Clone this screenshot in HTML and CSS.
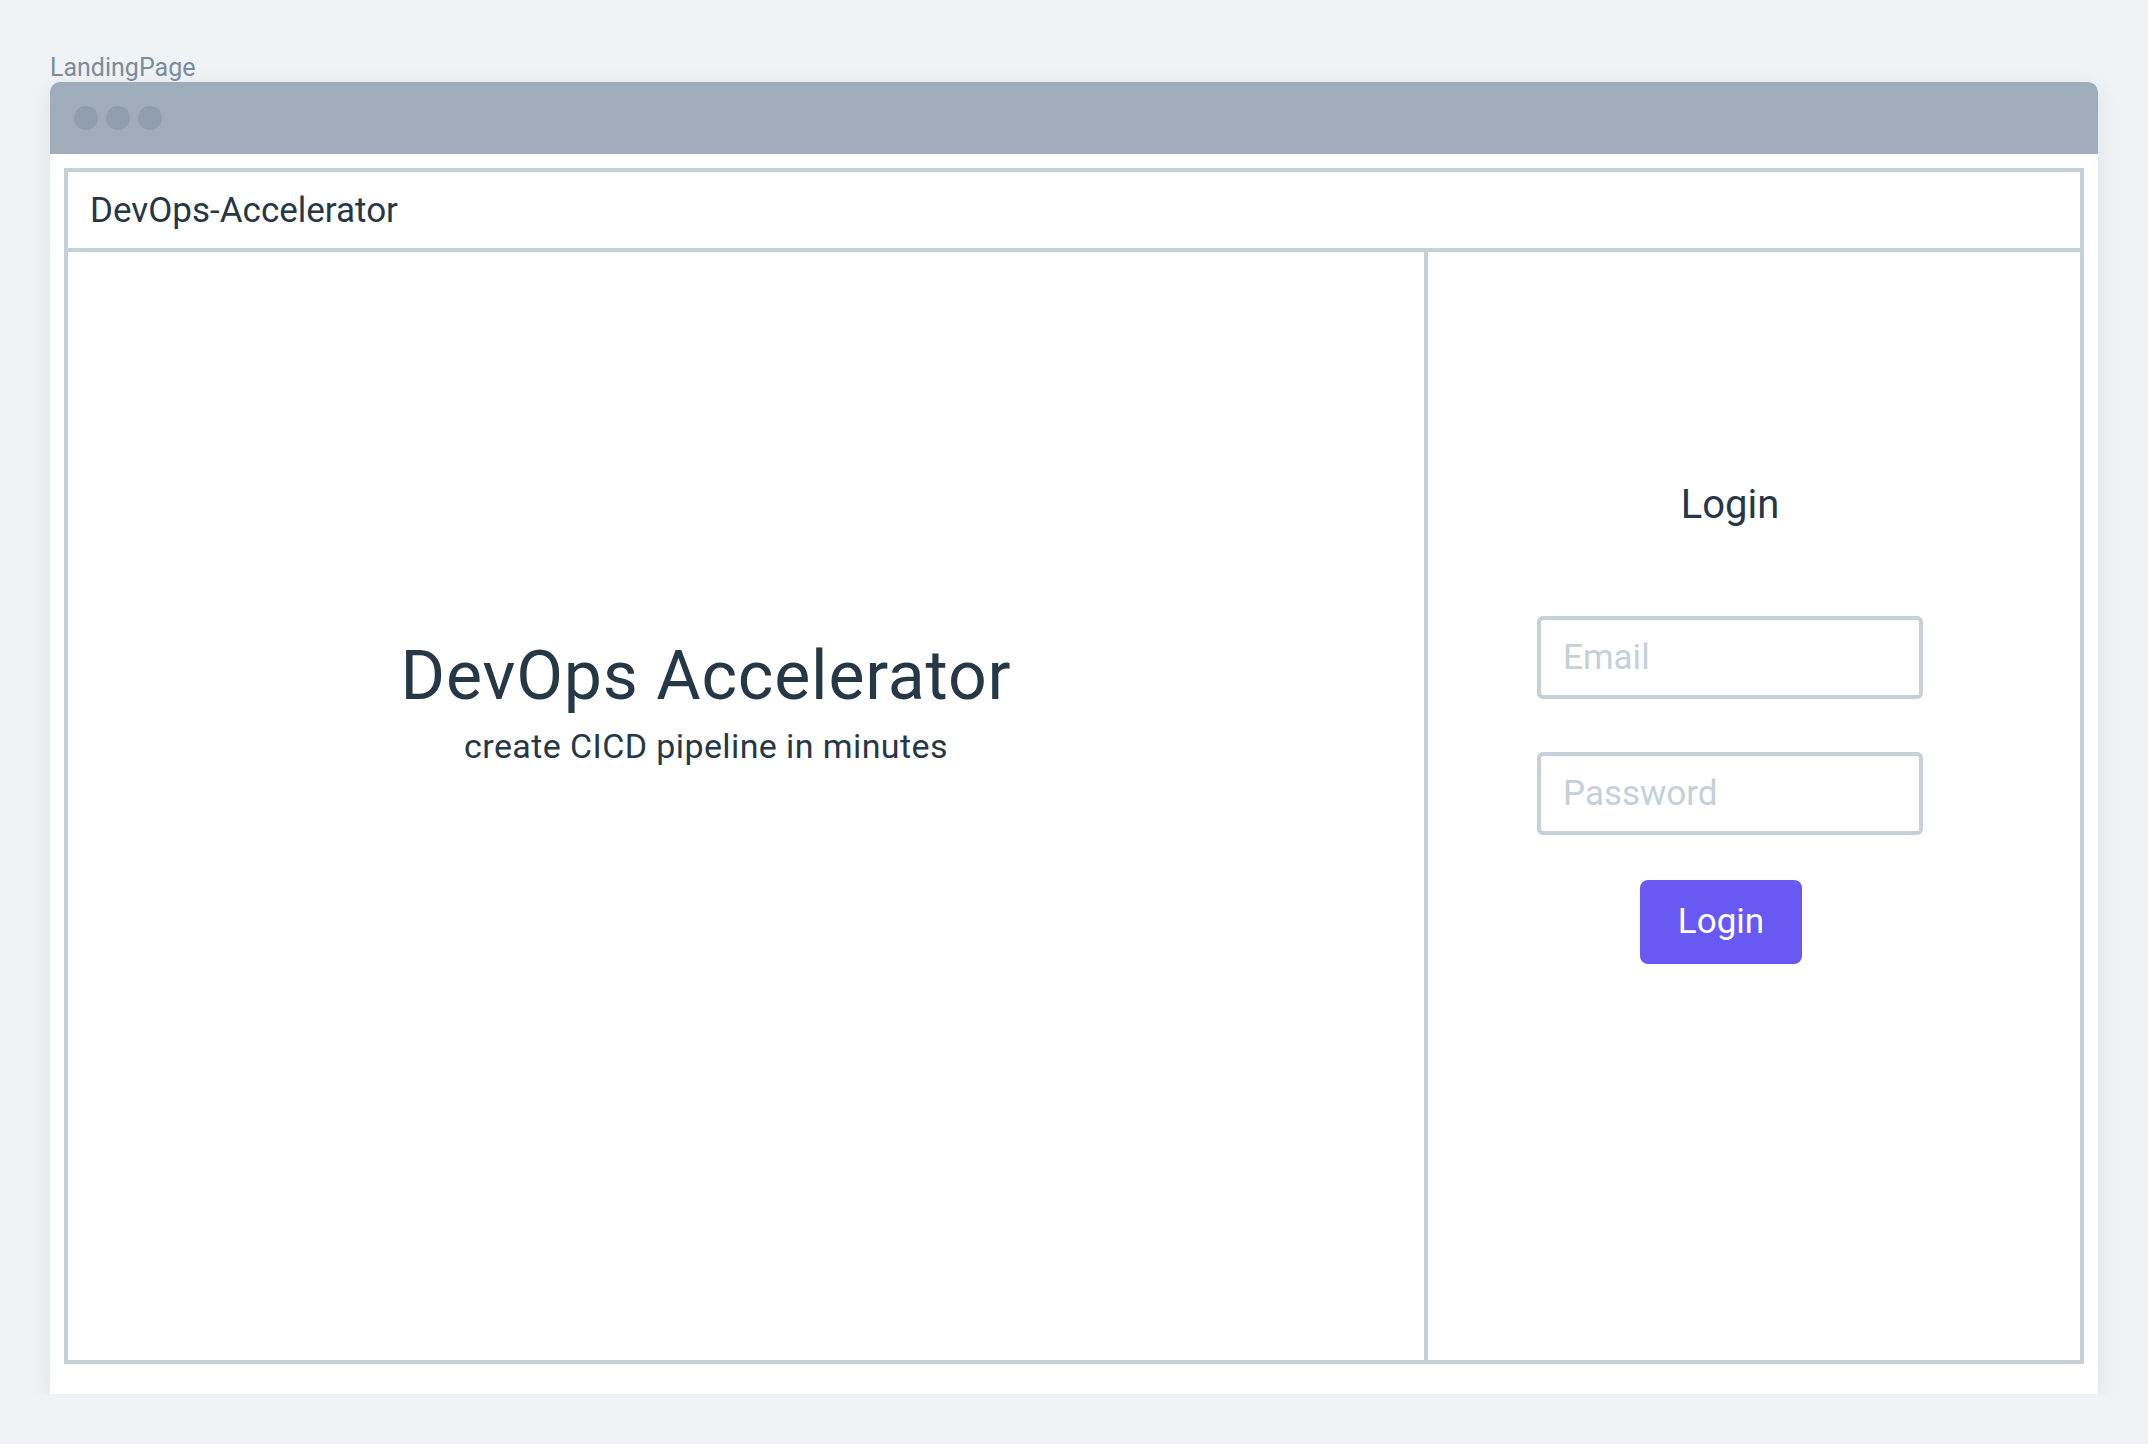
FILE: index.html
```html
<!DOCTYPE html>
<html lang="en">
<head>
<meta charset="utf-8">
<title>LandingPage</title>
<link rel="stylesheet" href="styles.css">
</head>
<body>
  <div class="page">
    <div class="frame-label">LandingPage</div>
    <div class="window">
      <div class="titlebar">
        <span class="dot"></span><span class="dot"></span><span class="dot"></span>
      </div>
      <div class="window-body">
        <div class="app">
          <header class="app-header">DevOps-Accelerator</header>
          <main class="app-main">
            <section class="hero">
              <h1 class="hero-title">DevOps Accelerator</h1>
              <p class="hero-sub">create CICD pipeline in minutes</p>
            </section>
            <section class="login">
              <h2 class="login-title">Login</h2>
              <div class="field"><span class="placeholder">Email</span></div>
              <div class="field field-second"><span class="placeholder">Password</span></div>
              <button class="login-btn" type="button">Login</button>
            </section>
          </main>
        </div>
      </div>
    </div>
  </div>
</body>
</html>
```
FILE: styles.css
```css
* { box-sizing: border-box; }
html, body { margin: 0; padding: 0; }
body {
  background: #eff3f6;
  font-family: Roboto, "Noto Sans", "Liberation Sans", sans-serif;
  color: #263746;
}
.page {
  padding: 54px 50px 0 50px;
}
.frame-label {
  font-size: 25px;
  line-height: 28px;
  color: #7b8c9b;
}
.window {
  width: 2048px;
  height: 1312px;
  background: #ffffff;
  border-radius: 10px 10px 0 0;
  box-shadow: 0 6px 22px rgba(40, 60, 80, 0.09);
  display: flex;
  flex-direction: column;
}
.titlebar {
  height: 72px;
  background: #9eadb9;
  border-radius: 10px 10px 0 0;
  display: flex;
  align-items: center;
  gap: 8px;
  padding-left: 24px;
}
.dot {
  width: 24px;
  height: 24px;
  border-radius: 50%;
  background: #8e9eac;
}
.window-body {
  flex: 1;
  padding: 14px 14px 30px 14px;
  display: flex;
}
.app {
  flex: 1;
  border: 4px solid #c5d0d9;
  display: flex;
  flex-direction: column;
}
.app-header {
  height: 80px;
  border-bottom: 4px solid #c5d0d9;
  font-size: 35px;
  line-height: 77px;
  padding-left: 22px;
  color: #263746;
}
.app-main {
  flex: 1;
  display: flex;
}
.hero {
  width: 1360px;
  border-right: 4px solid #c5d0d9;
  padding: 384px 80px 0 0;
  text-align: center;
}
.hero-title {
  margin: 0;
  font-weight: 400;
  font-size: 68px;
  line-height: 80px;
  letter-spacing: 0.8px;
  color: #263746;
}
.hero-sub {
  margin: 10px 0 0 0;
  font-size: 34px;
  line-height: 40px;
  letter-spacing: 0.4px;
  color: #263746;
}
.login {
  flex: 1;
  padding: 229px 48px 0 0;
  display: flex;
  flex-direction: column;
  align-items: center;
}
.login-title {
  margin: 0;
  font-weight: 400;
  font-size: 40px;
  line-height: 48px;
  color: #263746;
}
.field {
  margin-top: 87px;
  width: 386px;
  height: 83px;
  border: 4px solid #c5d0d9;
  border-radius: 6px;
  padding-left: 22px;
  font-size: 35px;
  line-height: 76px;
}
.field-second {
  margin-top: 53px;
}
.placeholder {
  color: #c5d0da;
}
.login-btn {
  margin-top: 45px;
  margin-right: 18px;
  width: 162px;
  height: 84px;
  border: none;
  border-radius: 8px;
  background: #6859f3;
  color: #ffffff;
  font-family: Roboto, "Noto Sans", "Liberation Sans", sans-serif;
  font-size: 35px;
  line-height: 84px;
  padding: 0;
}
```
